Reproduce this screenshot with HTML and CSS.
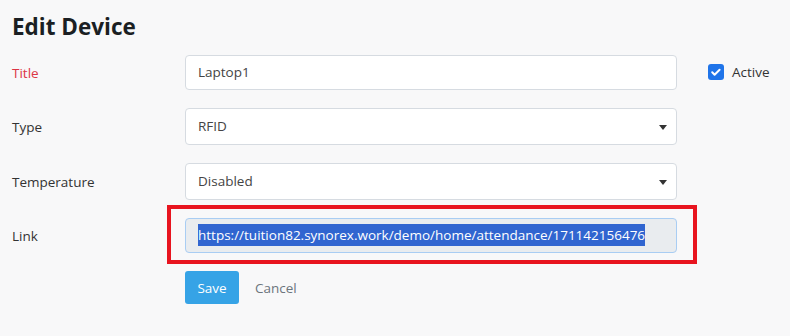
FILE: index.html
```html
<!DOCTYPE html>
<html lang="en">
<head>
    <meta charset="UTF-8">
    <meta name="viewport" content="width=device-width, initial-scale=1.0">
    <title>Edit Device</title>
    <link rel="stylesheet" href="styles.css">
</head>
<body>
    <div class="page">
        <h1 class="page-title">Edit Device</h1>

        <form class="device-form">
            <div class="form-row">
                <label class="form-label required">Title</label>
                <div class="field"><div class="form-control">Laptop1</div></div>
                <div class="form-check">
                    <span class="check-box">
                        <svg viewBox="0 0 16 16" width="16" height="16"><path d="M4.2 8.3l2.4 2.4 5-5" fill="none" stroke="#fff" stroke-width="2" stroke-linecap="round" stroke-linejoin="round"/></svg>
                    </span>
                    <span class="check-label">Active</span>
                </div>
            </div>

            <div class="form-row">
                <label class="form-label">Type</label>
                <div class="field"><div class="form-control select">RFID<span class="caret"></span></div></div>
            </div>

            <div class="form-row">
                <label class="form-label">Temperature</label>
                <div class="field"><div class="form-control select">Disabled<span class="caret"></span></div></div>
            </div>

            <div class="form-row">
                <label class="form-label">Link</label>
                <div class="field">
                    <div class="form-control readonly"><span class="selected">https://tuition82.synorex.work/demo/home/attendance/171142156476</span></div>
                    <div class="highlight-box"></div>
                </div>
            </div>

            <div class="form-actions">
                <button type="button" class="btn btn-save">Save</button>
                <button type="button" class="btn btn-cancel">Cancel</button>
            </div>
        </form>
    </div>
</body>
</html>
```

FILE: styles.css
```css
:root {
    --primary-color: #36a3e6;
    --danger-color: #dc3545;
    --border-color: #d6dbe1;
    --text-color: #212529;
    --muted-color: #6c757d;
    --background-color: #f8f8f9;
}

body {
    margin: 0;
    font-family: "Open Sans", "Noto Sans", sans-serif;
    background-color: var(--background-color);
    color: var(--text-color);
}

.page {
    padding: 11px 12px;
}

.page-title {
    font-size: 22.5px;
    font-weight: 700;
    margin: 0 0 12px;
    line-height: 32px;
    color: #1b1f23;
}

.form-row {
    display: grid;
    grid-template-columns: 173px 492px auto;
    align-items: center;
    margin-bottom: 18px;
}

.form-label {
    font-size: 13.5px;
    color: #333;
}

.form-label.required {
    color: var(--danger-color);
}

.field {
    position: relative;
}

.form-control {
    height: 35px;
    box-sizing: border-box;
    border: 1px solid var(--border-color);
    border-radius: 4px;
    background: #fff;
    padding: 0 12px;
    font-size: 13.5px;
    line-height: 33px;
    color: #444;
    position: relative;
}

.select {
    height: 37px;
    line-height: 35px;
}

.caret {
    position: absolute;
    right: 9px;
    top: 16px;
    border-left: 4px solid transparent;
    border-right: 4px solid transparent;
    border-top: 5px solid #333;
}

.readonly {
    background: #e9ecef;
    border-color: #a9cdf3;
    font-size: 13.5px;
    white-space: nowrap;
}

.selected {
    background: #3065d0;
    color: #fff;
    padding: 2px 0;
}

.highlight-box {
    position: absolute;
    left: -18px;
    top: -13px;
    right: -20px;
    bottom: -11px;
    border: 4px solid #e8141f;
    pointer-events: none;
}

.form-check {
    display: flex;
    align-items: center;
    gap: 8px;
    margin-left: 31px;
    margin-top: -2px;
}

.check-box {
    width: 16px;
    height: 16px;
    border-radius: 3px;
    background: #1f74e9;
    display: flex;
}

.check-label {
    font-size: 13.5px;
    color: #333;
}

.form-actions {
    display: flex;
    align-items: center;
    gap: 6px;
    margin-left: 173px;
    margin-top: 0;
}

.btn {
    font-family: inherit;
    font-size: 13.5px;
    border: none;
    border-radius: 3px;
    cursor: pointer;
}

.btn-save {
    background: var(--primary-color);
    color: #fff;
    width: 54px;
    height: 33px;
}

.btn-cancel {
    background: none;
    color: var(--muted-color);
    padding: 0 10px;
}
```
